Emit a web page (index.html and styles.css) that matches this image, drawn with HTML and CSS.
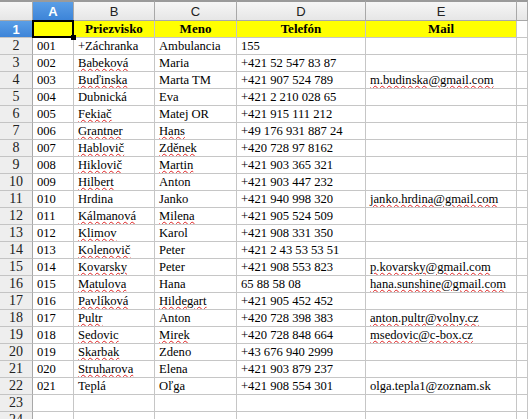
FILE: index.html
```html
<!DOCTYPE html>
<html>
<head>
<meta charset="utf-8">
<link rel="stylesheet" href="styles.css">
</head>
<body>
<div class="sheet">
  <div class="ch corner"></div>
  <div class="ch sel">A</div>
  <div class="ch">B</div>
  <div class="ch">C</div>
  <div class="ch">D</div>
  <div class="ch">E</div>
  <div class="ch last"></div>

  <div class="rh sel">1</div>
  <div class="c y a1"><span class="handle"></span></div>
  <div class="c y hd">Priezvisko</div>
  <div class="c y hd">Meno</div>
  <div class="c y hd">Telefón</div>
  <div class="c y hd">Mail</div>
  <div class="c"></div>

  <div class="rh">2</div><div class="c">001</div><div class="c">+Záchranka</div><div class="c">Ambulancia</div><div class="c">155</div><div class="c"></div><div class="c"></div>
  <div class="rh">3</div><div class="c">002</div><div class="c"><u>Babeková</u></div><div class="c">Maria</div><div class="c">+421 52 547 83 87</div><div class="c"></div><div class="c"></div>
  <div class="rh">4</div><div class="c">003</div><div class="c"><u>Buďinska</u></div><div class="c">Marta TM</div><div class="c">+421 907 524 789</div><div class="c"><u>m.budinska@gmail.com</u></div><div class="c"></div>
  <div class="rh">5</div><div class="c">004</div><div class="c">Dubnická</div><div class="c">Eva</div><div class="c">+421 2 210 028 65</div><div class="c"></div><div class="c"></div>
  <div class="rh">6</div><div class="c">005</div><div class="c"><u>Fekiač</u></div><div class="c">Matej OR</div><div class="c">+421 915 111 212</div><div class="c"></div><div class="c"></div>
  <div class="rh">7</div><div class="c">006</div><div class="c"><u>Grantner</u></div><div class="c"><u>Hans</u></div><div class="c">+49 176 931 887 24</div><div class="c"></div><div class="c"></div>
  <div class="rh">8</div><div class="c">007</div><div class="c"><u>Hablovič</u></div><div class="c"><u>Zděnek</u></div><div class="c">+420 728 97 8162</div><div class="c"></div><div class="c"></div>
  <div class="rh">9</div><div class="c">008</div><div class="c"><u>Hiklovič</u></div><div class="c"><u>Martin</u></div><div class="c">+421 903 365 321</div><div class="c"></div><div class="c"></div>
  <div class="rh">10</div><div class="c">009</div><div class="c"><u>Hilbert</u></div><div class="c">Anton</div><div class="c">+421 903 447 232</div><div class="c"></div><div class="c"></div>
  <div class="rh">11</div><div class="c">010</div><div class="c">Hrdina</div><div class="c">Janko</div><div class="c">+421 940 998 320</div><div class="c"><u>janko.hrdina@gmail.com</u></div><div class="c"></div>
  <div class="rh">12</div><div class="c">011</div><div class="c"><u>Kálmanová</u></div><div class="c"><u>Milena</u></div><div class="c">+421 905 524 509</div><div class="c"></div><div class="c"></div>
  <div class="rh">13</div><div class="c">012</div><div class="c"><u>Klimov</u></div><div class="c">Karol</div><div class="c">+421 908 331 350</div><div class="c"></div><div class="c"></div>
  <div class="rh">14</div><div class="c">013</div><div class="c"><u>Kolenovič</u></div><div class="c">Peter</div><div class="c">+421 2 43 53 53 51</div><div class="c"></div><div class="c"></div>
  <div class="rh">15</div><div class="c">014</div><div class="c"><u>Kovarsky</u></div><div class="c">Peter</div><div class="c">+421 908 553 823</div><div class="c"><u>p.kovarsky@gmail.com</u></div><div class="c"></div>
  <div class="rh">16</div><div class="c">015</div><div class="c"><u>Matulova</u></div><div class="c">Hana</div><div class="c">65 88 58 08</div><div class="c"><u>hana.sunshine@gmail.com</u></div><div class="c"></div>
  <div class="rh">17</div><div class="c">016</div><div class="c"><u>Pavlíková</u></div><div class="c"><u>Hildegart</u></div><div class="c">+421 905 452 452</div><div class="c"></div><div class="c"></div>
  <div class="rh">18</div><div class="c">017</div><div class="c"><u>Pultr</u></div><div class="c">Anton</div><div class="c">+420 728 398 383</div><div class="c"><u>anton.pultr@volny.cz</u></div><div class="c"></div>
  <div class="rh">19</div><div class="c">018</div><div class="c"><u>Sedovic</u></div><div class="c"><u>Mirek</u></div><div class="c">+420 728 848 664</div><div class="c"><u>msedovic@c-box.cz</u></div><div class="c"></div>
  <div class="rh">20</div><div class="c">019</div><div class="c"><u>Skarbak</u></div><div class="c">Zdeno</div><div class="c">+43 676 940 2999</div><div class="c"></div><div class="c"></div>
  <div class="rh">21</div><div class="c">020</div><div class="c"><u>Struharova</u></div><div class="c">Elena</div><div class="c">+421 903 879 237</div><div class="c"></div><div class="c"></div>
  <div class="rh">22</div><div class="c">021</div><div class="c">Teplá</div><div class="c">Oľga</div><div class="c">+421 908 554 301</div><div class="c">olga.tepla1@zoznam.sk</div><div class="c"></div>
  <div class="rh">23</div><div class="c"></div><div class="c"></div><div class="c"></div><div class="c"></div><div class="c"></div><div class="c"></div>
  <div class="rh">24</div><div class="c"></div><div class="c"></div><div class="c"></div><div class="c"></div><div class="c"></div><div class="c"></div>
</div>
</body>
</html>
```
FILE: styles.css
```css
html, body {
  margin: 0;
  padding: 0;
  background: #ffffff;
  overflow: hidden;
}
.sheet {
  display: grid;
  grid-template-columns: 33px 41px 81px 82px 129px 151px 11px;
  grid-template-rows: 21px;
  grid-auto-rows: 17px;
  width: 528px;
  font-family: "Liberation Serif", "Times New Roman", serif;
  font-size: 12.6px;
  color: #000;
}
.ch {
  box-sizing: border-box;
  border-top: 2px solid #9a9a9a;
  border-right: 1px solid #a8a8a8;
  border-bottom: 1px solid #a8a8a8;
  background: linear-gradient(#f6f6f6, #e6e6e6);
  font-family: "Liberation Sans", Arial, sans-serif;
  font-size: 13px;
  color: #222;
  display: flex;
  align-items: center;
  justify-content: center;
}
.ch.sel {
  background: linear-gradient(#5a9ee6, #3d84d8);
  color: #fff;
  font-weight: bold;
}
.rh {
  box-sizing: border-box;
  border-right: 1px solid #a8a8a8;
  border-bottom: 1px solid #c4c4c4;
  background: #eeeeee;
  display: flex;
  align-items: center;
  justify-content: center;
  font-size: 14px;
  color: #222;
}
.rh.sel {
  background: linear-gradient(#5a9ee6, #3d84d8);
  color: #fff;
  font-family: "Liberation Sans", Arial, sans-serif;
  font-weight: bold;
  font-size: 13px;
}
.c {
  box-sizing: border-box;
  border-right: 1px solid #c6c6c6;
  border-bottom: 1px solid #c6c6c6;
  padding: 0 0 0 4px;
  white-space: nowrap;
  overflow: hidden;
  display: flex;
  align-items: center;
}
.c.y {
  background: #ffff00;
}
.c.hd {
  justify-content: center;
  font-weight: bold;
  font-size: 13px;
  padding: 0;
}
.c.a1 {
  position: relative;
  overflow: visible;
  border: 2px solid #000;
  margin: -1px 0 0 -1px;
  width: calc(100% + 1px);
  height: calc(100% + 1px);
}
.handle {
  position: absolute;
  right: -4px;
  bottom: -4px;
  width: 5px;
  height: 5px;
  background: #000;
  z-index: 2;
}
u {
  text-decoration: underline wavy #e02020;
  text-decoration-thickness: 1px;
  text-underline-offset: 1px;
}
```
